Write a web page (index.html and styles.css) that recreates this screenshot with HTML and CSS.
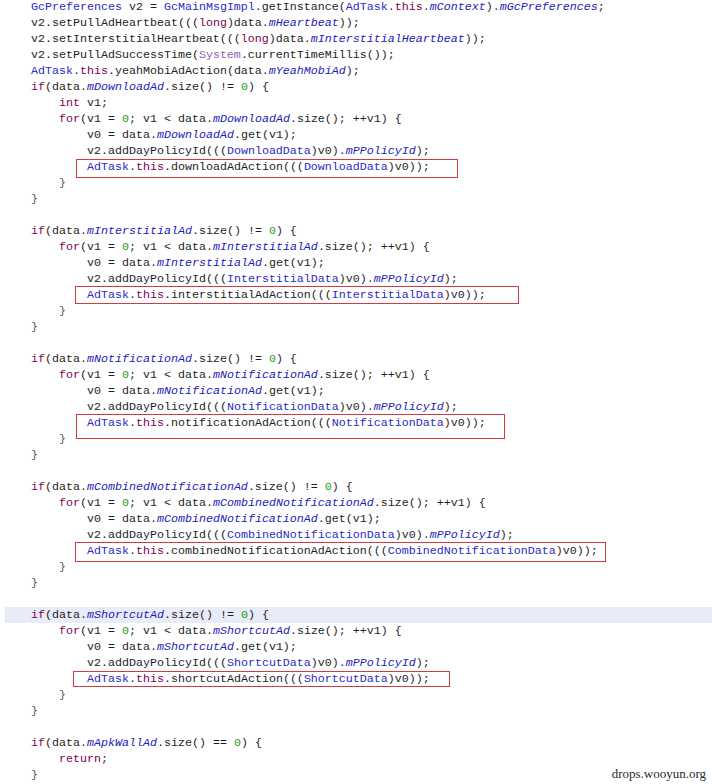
FILE: index.html
```html
<!DOCTYPE html>
<html>
<head>
<meta charset="utf-8">
<link rel="stylesheet" href="styles.css">
</head>
<body>
<div class="code">
<div class="ln"><span class="t">GcPreferences</span> v2 = <span class="t">GcMainMsgImpl</span>.getInstance(<span class="t">AdTask</span>.<span class="k">this</span>.<span class="f">mContext</span>).<span class="f">mGcPreferences</span>;</div>
<div class="ln">v2.setPullAdHeartbeat(((<span class="k">long</span>)data.<span class="f">mHeartbeat</span>));</div>
<div class="ln">v2.setInterstitialHeartbeat(((<span class="k">long</span>)data.<span class="f">mInterstitialHeartbeat</span>));</div>
<div class="ln">v2.setPullAdSuccessTime(<span class="s">System</span>.currentTimeMillis());</div>
<div class="ln"><span class="t">AdTask</span>.<span class="k">this</span>.yeahMobiAdAction(data.<span class="f">mYeahMobiAd</span>);</div>
<div class="ln"><span class="k">if</span>(data.<span class="f">mDownloadAd</span>.size() != <span class="n">0</span>) {</div>
<div class="ln i1"><span class="k">int</span> v1;</div>
<div class="ln i1"><span class="k">for</span>(v1 = <span class="n">0</span>; v1 &lt; data.<span class="f">mDownloadAd</span>.size(); ++v1) {</div>
<div class="ln i2">v0 = data.<span class="f">mDownloadAd</span>.get(v1);</div>
<div class="ln i2">v2.addDayPolicyId(((<span class="t">DownloadData</span>)v0).<span class="f">mPPolicyId</span>);</div>
<div class="ln i2"><span class="box b1"><span class="t">AdTask</span>.<span class="k">this</span>.downloadAdAction(((<span class="t">DownloadData</span>)v0));</span></div>
<div class="ln i1 g">}</div>
<div class="ln g">}</div>
<div class="ln"> </div>
<div class="ln"><span class="k">if</span>(data.<span class="f">mInterstitialAd</span>.size() != <span class="n">0</span>) {</div>
<div class="ln i1"><span class="k">for</span>(v1 = <span class="n">0</span>; v1 &lt; data.<span class="f">mInterstitialAd</span>.size(); ++v1) {</div>
<div class="ln i2">v0 = data.<span class="f">mInterstitialAd</span>.get(v1);</div>
<div class="ln i2">v2.addDayPolicyId(((<span class="t">InterstitialData</span>)v0).<span class="f">mPPolicyId</span>);</div>
<div class="ln i2"><span class="box b2"><span class="t">AdTask</span>.<span class="k">this</span>.interstitialAdAction(((<span class="t">InterstitialData</span>)v0));</span></div>
<div class="ln i1 g">}</div>
<div class="ln g">}</div>
<div class="ln"> </div>
<div class="ln"><span class="k">if</span>(data.<span class="f">mNotificationAd</span>.size() != <span class="n">0</span>) {</div>
<div class="ln i1"><span class="k">for</span>(v1 = <span class="n">0</span>; v1 &lt; data.<span class="f">mNotificationAd</span>.size(); ++v1) {</div>
<div class="ln i2">v0 = data.<span class="f">mNotificationAd</span>.get(v1);</div>
<div class="ln i2">v2.addDayPolicyId(((<span class="t">NotificationData</span>)v0).<span class="f">mPPolicyId</span>);</div>
<div class="ln i2"><span class="box b3"><span class="t">AdTask</span>.<span class="k">this</span>.notificationAdAction(((<span class="t">NotificationData</span>)v0));</span></div>
<div class="ln i1 g">}</div>
<div class="ln g">}</div>
<div class="ln"> </div>
<div class="ln"><span class="k">if</span>(data.<span class="f">mCombinedNotificationAd</span>.size() != <span class="n">0</span>) {</div>
<div class="ln i1"><span class="k">for</span>(v1 = <span class="n">0</span>; v1 &lt; data.<span class="f">mCombinedNotificationAd</span>.size(); ++v1) {</div>
<div class="ln i2">v0 = data.<span class="f">mCombinedNotificationAd</span>.get(v1);</div>
<div class="ln i2">v2.addDayPolicyId(((<span class="t">CombinedNotificationData</span>)v0).<span class="f">mPPolicyId</span>);</div>
<div class="ln i2"><span class="box b4"><span class="t">AdTask</span>.<span class="k">this</span>.combinedNotificationAdAction(((<span class="t">CombinedNotificationData</span>)v0));</span></div>
<div class="ln i1 g">}</div>
<div class="ln g">}</div>
<div class="ln"> </div>
<div class="ln hl"><span class="k">if</span>(data.<span class="f">mShortcutAd</span>.size() != <span class="n">0</span>) {</div>
<div class="ln i1"><span class="k">for</span>(v1 = <span class="n">0</span>; v1 &lt; data.<span class="f">mShortcutAd</span>.size(); ++v1) {</div>
<div class="ln i2">v0 = data.<span class="f">mShortcutAd</span>.get(v1);</div>
<div class="ln i2">v2.addDayPolicyId(((<span class="t">ShortcutData</span>)v0).<span class="f">mPPolicyId</span>);</div>
<div class="ln i2"><span class="box b5"><span class="t">AdTask</span>.<span class="k">this</span>.shortcutAdAction(((<span class="t">ShortcutData</span>)v0));</span></div>
<div class="ln i1 g">}</div>
<div class="ln g">}</div>
<div class="ln"> </div>
<div class="ln"><span class="k">if</span>(data.<span class="f">mApkWallAd</span>.size() == <span class="n">0</span>) {</div>
<div class="ln i1"><span class="k">return</span>;</div>
<div class="ln g">}</div>
</div>
<div class="mark">drops.wooyun.org</div>
</body>
</html>
```

FILE: styles.css
```css
html, body {
  margin: 0;
  padding: 0;
  background: #ffffff;
}
body {
  width: 712px;
  height: 784px;
  overflow: hidden;
  position: relative;
}
.code {
  margin-top: -1px;
  padding-left: 5px;
  font-family: "Liberation Mono", "Courier New", monospace;
  font-size: 11.67px;
  line-height: 16px;
  color: #1e1e1e;
}
.ln {
  height: 16px;
  padding-left: 26px;
  white-space: pre;
}
.ln.i1 { padding-left: 54px; }
.ln.i2 { padding-left: 82px; }
.ln.hl { background: #e8ebf8; }
.g { color: #555555; }
.k { color: #7f0055; }
.t { color: #2a2ac8; }
.f { color: #1c1cb8; font-style: italic; }
.n { color: #1f9a1f; }
.s { color: #9160b8; }
.box {
  position: relative;
}
.box::after {
  content: "";
  position: absolute;
  left: -11px;
  top: -1px;
  bottom: -4px;
  right: -28px;
  border: 1px solid #cf3c48;
}
.b2::after { left: -12px; right: -33px; top: -2px; bottom: -2px; }
.b3::after { left: -11px; right: -19px; top: -2px; bottom: -9px; }
.b4::after { left: -12px; right: -8px; top: -2px; bottom: -4px; }
.b5::after { left: -14px; right: -20px; top: -1px; bottom: -1px; }
.mark {
  position: absolute;
  right: 6px;
  bottom: 2px;
  font-family: "Liberation Serif", "Times New Roman", serif;
  font-size: 13px;
  color: #2a2a2a;
}
```
